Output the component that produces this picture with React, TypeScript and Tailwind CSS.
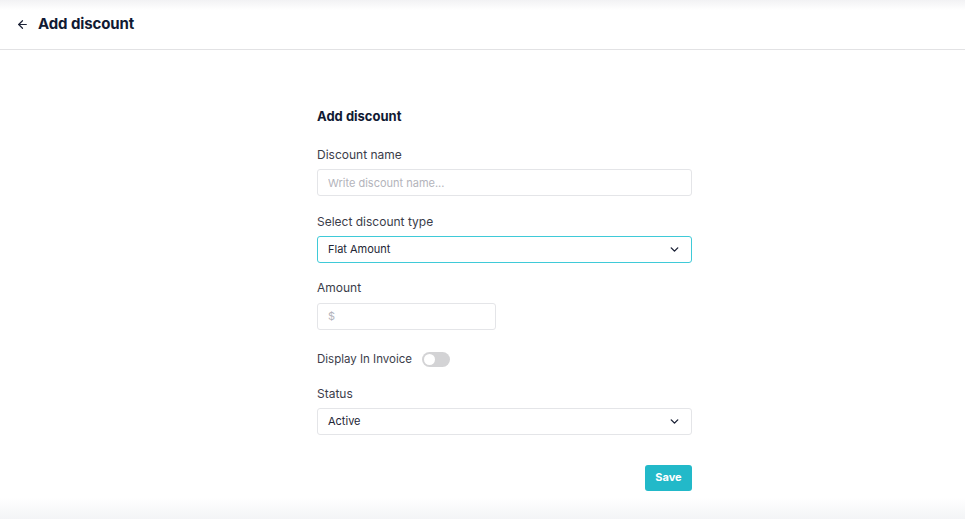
import React from "react";
import { ArrowLeft, ChevronDown } from "lucide-react";

const Label = ({ children }: { children: React.ReactNode }) => (
  <p className="text-[12px] leading-[18px] text-[#3b3d4a] mb-[5px]">{children}</p>
);

const App = () => {
  return (
    <div
      className="w-[965px] h-[519px] flex flex-col bg-white text-[#111a33]"
      style={{ fontFamily: "Inter, 'Noto Sans', sans-serif" }}
    >
      <header className="h-[50px] shrink-0 flex items-center gap-[9px] px-[16px] border-b border-[#e2e2e4] bg-[linear-gradient(to_bottom,#f2f2f4,#ffffff_10px)]">
        <ArrowLeft className="w-[13px] h-[13px] text-[#1b2236]" strokeWidth={2.2} />
        <h1 className="text-[15px] font-bold tracking-[-0.1px] text-[#111a33]">Add discount</h1>
      </header>

      <main className="flex-1 pl-[317px] pt-[56px]">
        <div className="w-[375px] flex flex-col">
          <h2 className="text-[13px] leading-[20px] font-bold text-[#111a33] mb-[20px]">Add discount</h2>

          <Label>Discount name</Label>
          <input
            className="h-[27px] w-full rounded-[3px] border border-[#e4e5e8] px-[10px] text-[11px] outline-none placeholder:text-[#b3b4bb]"
            placeholder="Write discount name..."
          />

          <div className="mt-[17px]">
            <Label>Select discount type</Label>
            <div className="h-[27px] w-full rounded-[3px] border border-[#3fcad8] px-[10px] flex items-center justify-between">
              <span className="text-[11px] text-[#232636]">Flat Amount</span>
              <ChevronDown className="w-[13px] h-[13px] text-[#1b2236]" strokeWidth={2.6} />
            </div>
          </div>

          <div className="mt-[16px]">
            <Label>Amount</Label>
            <input
              className="h-[27px] w-[179px] rounded-[3px] border border-[#e4e5e8] px-[10px] text-[11px] outline-none placeholder:text-[#b3b4bb]"
              placeholder="$"
            />
          </div>

          <div className="mt-[22px] flex items-center gap-[10px] h-[16px]">
            <span className="text-[11.5px] text-[#3b3d4a]">Display In Invoice</span>
            <div className="w-[28px] h-[15px] rounded-full bg-[#d3d3d5] p-[2px] flex items-center">
              <div className="w-[11px] h-[11px] rounded-full bg-white" />
            </div>
          </div>

          <div className="mt-[17px]">
            <Label>Status</Label>
            <div className="h-[27px] w-full rounded-[3px] border border-[#e4e5e8] px-[10px] flex items-center justify-between">
              <span className="text-[11px] text-[#232636]">Active</span>
              <ChevronDown className="w-[13px] h-[13px] text-[#1b2236]" strokeWidth={2.6} />
            </div>
          </div>

          <div className="mt-[30px] flex justify-end">
            <button className="h-[26px] w-[47px] rounded-[3px] bg-[#22b9c9] text-white text-[11px] font-bold">
              Save
            </button>
          </div>
        </div>
      </main>

      <footer className="h-[21px] shrink-0 bg-[linear-gradient(to_bottom,#ffffff,#f3f4f6)]" />
    </div>
  );
};

export default App;
